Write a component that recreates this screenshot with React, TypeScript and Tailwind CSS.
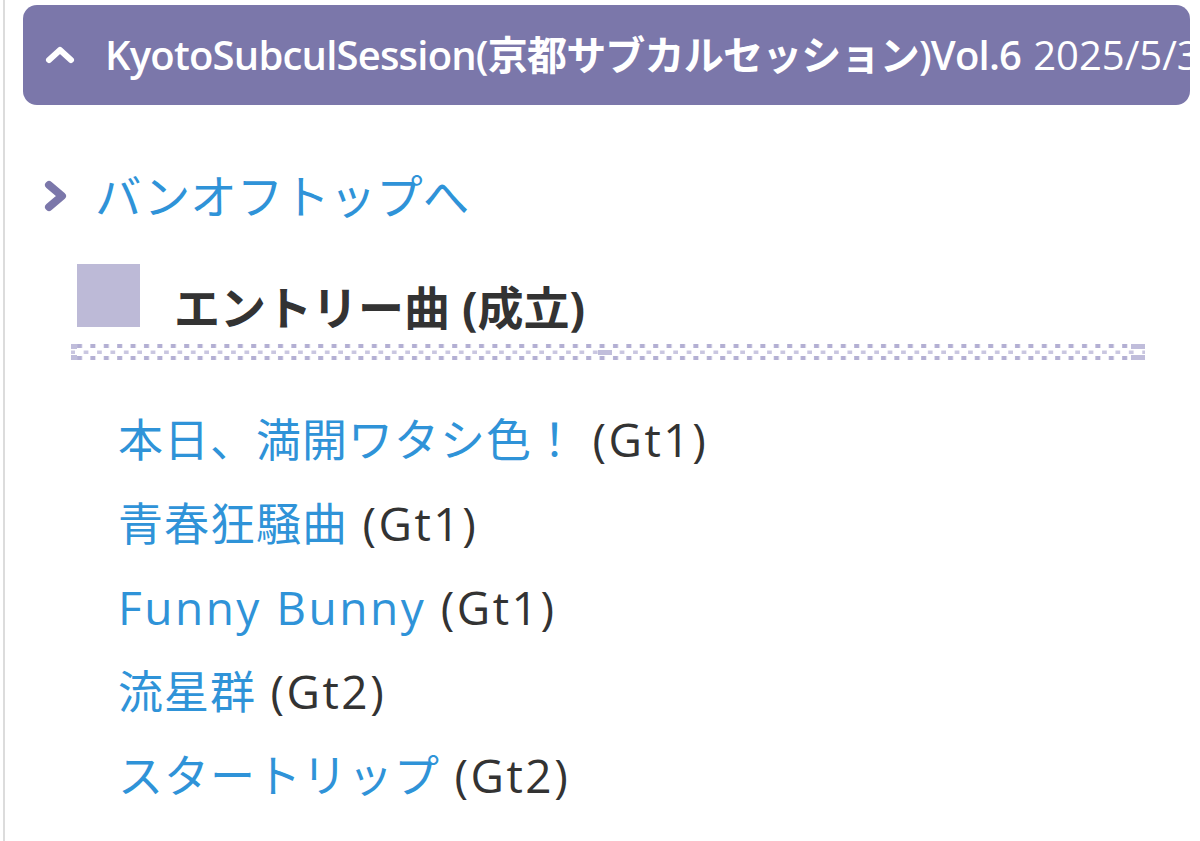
import React from 'react';

const songs = [
    { title: '本日、満開ワタシ色！', part: 'Gt1', latin: false },
    { title: '青春狂騒曲', part: 'Gt1', latin: false },
    { title: 'Funny Bunny', part: 'Gt1', latin: true },
    { title: '流星群', part: 'Gt2', latin: false },
    { title: 'スタートリップ', part: 'Gt2', latin: false },
];

const font = { fontFamily: '"Open Sans", "Noto Sans CJK JP", sans-serif' };

// Decorative dotted rule under the section heading
const PatternRule: React.FC = () => (
    <svg className="block h-[20px] w-[1074px]" viewBox="0 0 1074 20" preserveAspectRatio="none">
        <defs>
            <pattern id="rule" x="4" y="0" width="13.4" height="20" patternUnits="userSpaceOnUse">
                <rect x="2" y="2" width="5" height="4" fill="#b3afd3" />
                <rect x="8.7" y="8.5" width="5" height="3.5" fill="#c9c6e0" />
                <rect x="2" y="14" width="5" height="4" fill="#b3afd3" />
            </pattern>
        </defs>
        <rect x="0" y="0" width="1074" height="20" fill="url(#rule)" />
        <rect x="0" y="2" width="6" height="5" fill="#c0bddb" />
        <rect x="0" y="13" width="6" height="5" fill="#c0bddb" />
        <rect x="527" y="8" width="14" height="5" fill="#c0bddb" />
        <rect x="1060" y="2" width="14" height="5" fill="#c0bddb" />
        <rect x="1060" y="13" width="14" height="5" fill="#c0bddb" />
    </svg>
);

const App: React.FC = () => {
    return (
        <div className="min-h-[841px] w-[1200px] overflow-hidden bg-white" style={font}>
            <div className="ml-[3px] min-h-[841px] border-l-2 border-[#dcdcdc] pt-[5px] pr-[10px] pl-[18px]">
                {/* Accordion header */}
                <div className="flex h-[100px] items-center overflow-hidden rounded-[14px] bg-[#7b77aa] pl-[22px] whitespace-nowrap text-white">
                    <svg className="mr-[30px] h-[18px] w-[30px] shrink-0" viewBox="0 0 30 18" fill="none">
                        <path d="M4 14 L15 4 L26 14" stroke="#fff" strokeWidth="6" strokeLinecap="round" strokeLinejoin="round" />
                    </svg>
                    <span className="text-[40px] font-semibold tracking-[-0.8px]">KyotoSubculSession(京都サブカルセッション)Vol.6</span>
                    <span className="ml-[12px] text-[40px] font-normal">2025/5/3</span>
                </div>

                {/* Back link */}
                <div className="mt-[68px] flex items-center pl-[20px]">
                    <svg className="mr-[27px] h-[32px] w-[25px] shrink-0" viewBox="0 0 25 32" fill="none">
                        <path d="M6 5 L19 16 L6 27" stroke="#7b77aa" strokeWidth="8" strokeLinecap="round" strokeLinejoin="round" />
                    </svg>
                    <span className="text-[46.5px] leading-none text-[#2f93d8]">バンオフトップへ</span>
                </div>

                {/* Section heading */}
                <div className="mt-[44px] ml-[54px]">
                    <div className="flex items-end">
                        <div className="h-[63px] w-[63px] shrink-0 bg-[#bdbad7]" />
                        <h2 className="-mb-[3px] ml-[34px] text-[46px] leading-none font-bold text-[#333]">エントリー曲 (成立)</h2>
                    </div>
                    <div className="mt-[15px] -ml-[6px]">
                        <PatternRule />
                    </div>
                </div>

                {/* Song list */}
                <ul className="mt-[50px] flex flex-col gap-[29px] pl-[95px]">
                    {songs.map((song, i) => (
                        <li key={i} className="text-[45px] leading-[54px] tracking-[1px]">
                            <span className={song.latin ? 'text-[46px] tracking-[2.5px] text-[#2f93d8]' : 'text-[#2f93d8]'}>{song.title}</span>
                            <span className="text-[46px] tracking-[2.5px] text-[#333]"> ({song.part})</span>
                        </li>
                    ))}
                </ul>
            </div>
        </div>
    );
};

export default App;
